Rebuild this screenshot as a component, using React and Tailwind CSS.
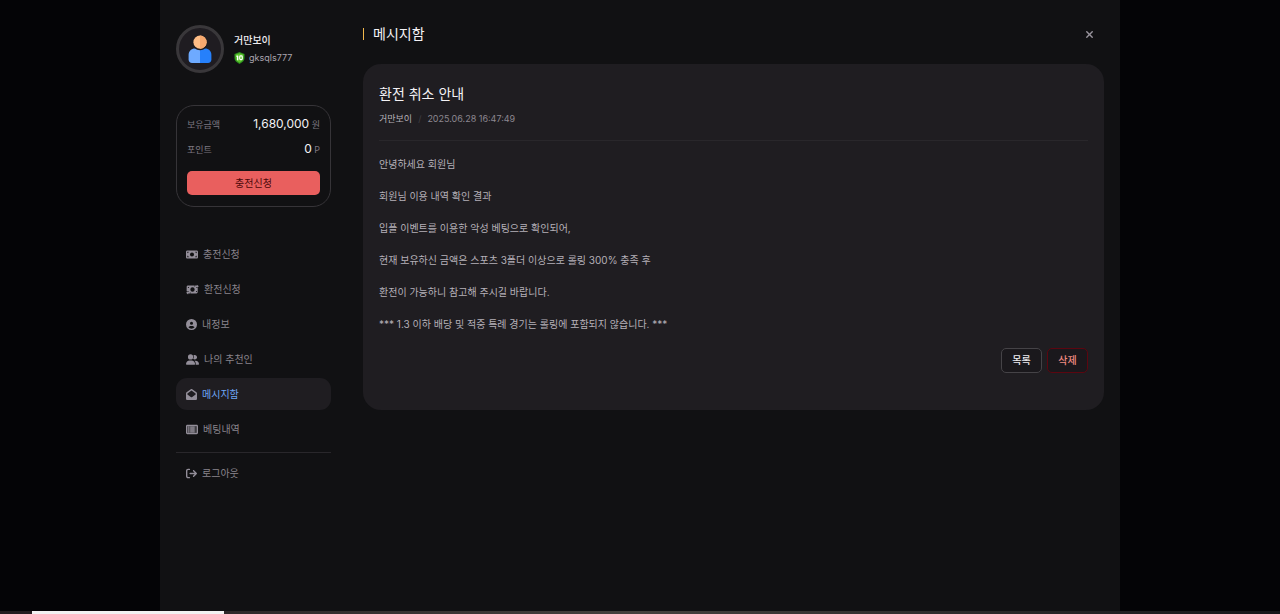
import React from "react";
import {
  FaMoneyBill,
  FaCircleUser,
  FaUserGroup,
  FaEnvelopeOpen,
  FaArrowRightFromBracket,
  FaXmark,
} from "react-icons/fa6";

function SlipIcon(props) {
  return (
    <svg viewBox="0 0 576 512" fill="currentColor" aria-hidden="true" {...props}>
      <path
        fillRule="evenodd"
        d="M64 32h448c35 0 64 29 64 64v320c0 35-29 64-64 64H64c-35 0-64-29-64-64V96c0-35 29-64 64-64zm0 72v304h448V104H64z"
      />
      <path d="M112 104h48v304h-48z" />
      <path d="M200 104h216v304H200z" opacity=".75" />
      <path d="M64 104h448v304H64z" opacity=".35" />
    </svg>
  );
}

function ExchangeBillIcon(props) {
  return (
    <svg viewBox="0 0 640 512" fill="currentColor" aria-hidden="true" {...props}>
      <path
        fillRule="evenodd"
        d="M96 64h336l-24 40h96l8 72h64v208c0 35-29 64-64 64H208l24-40h-96l-8-72H32V128c0-35 29-64 64-64zm224 84a108 108 0 1 0 0 216 108 108 0 0 0 0-216zM96 128v56c31 0 56-25 56-56zm448 256v-56c-31 0-56 25-56 56z"
      />
      <path d="M536 16l96 80-96 80v-48h-88V64h88zM104 336l-96 80 96 80v-48h88v-64h-88z" />
    </svg>
  );
}

function AvatarIcon() {
  return (
    <svg viewBox="0 0 24 28" className="h-7 w-6" aria-hidden="true">
      <path d="M.6 24.5V20c0-4 2.800-6.500 6.400-6.500h5V28H4C2 28 .6 26.500.6 24.500z" fill="#6eaaff" />
      <path d="M23.400 24.500V20c0-4-2.800-6.500-6.400-6.500h-5V28h8c2 0 3.400-1.500 3.400-3.500z" fill="#2680fb" />
      <circle cx="12" cy="7.500" r="7.800" fill="#1f1c21" />
      <circle cx="12" cy="7.200" r="6.600" fill="#ffbd86" />
      <path d="M12 .6a6.600 6.600 0 0 1 0 13.200z" fill="#f6a86f" />
    </svg>
  );
}

function LevelBadge() {
  return (
    <svg viewBox="0 0 24 26" className="h-3 w-[11px]" aria-label="10">
      <path d="M12 0l11 4v9c0 6-5 10-11 13C6 23 1 19 1 13V4z" fill="#2c8f1d" />
      <path d="M12 2.500l8.500 3V13c0 5-4 8-8.500 10.200C7.500 21 3.500 18 3.500 13V5.500z" fill="#5cc32c" />
      <path d="M8 8v10M5.500 10L8 8" stroke="#fff" strokeWidth="3" fill="none" />
      <rect x="12.500" y="8.500" width="5.500" height="8" rx="2" stroke="#fff" strokeWidth="2.500" fill="none" />
    </svg>
  );
}

const menu = [
  { label: "충전신청", Icon: FaMoneyBill, size: "h-[11px] w-3" },
  { label: "환전신청", Icon: ExchangeBillIcon, size: "h-[11px] w-[13px]" },
  { label: "내정보", Icon: FaCircleUser, size: "h-[11px] w-[11px]" },
  { label: "나의 추천인", Icon: FaUserGroup, size: "h-[11px] w-[13px]" },
  { label: "메시지함", Icon: FaEnvelopeOpen, size: "h-[11px] w-[11px]", active: true },
  { label: "베팅내역", Icon: SlipIcon, size: "h-[11px] w-3" },
];

const lines = [
  "안녕하세요 회원님",
  "회원님 이용 내역 확인 결과",
  "입플 이벤트를 이용한 악성 베팅으로 확인되어,",
  "현재 보유하신 금액은 스포츠 3폴더 이상으로 롤링 300% 충족 후",
  "환전이 가능하니 참고해 주시길 바랍니다.",
  "*** 1.3 이하 배당 및 적중 특례 경기는 롤링에 포함되지 않습니다. ***",
];

function MenuItem({ label, Icon, size, active }) {
  return (
    <a
      href="#"
      aria-current={active ? "page" : undefined}
      className={
        active
          ? "flex h-8 items-center gap-[5px] rounded-[11px] bg-[#1f1d21] px-[10px] text-[#6ea6f5]"
          : "flex h-8 items-center gap-[5px] rounded-[11px] px-[10px] text-[#89848c]"
      }
    >
      <Icon className={`shrink-0 text-[#938e99] ${size}`} />
      {label}
    </a>
  );
}

function Sidebar() {
  return (
    <aside className="w-[155px] shrink-0 pt-[25px]">
      <div className="flex items-center gap-[10px]">
        <div className="flex h-12 w-12 items-center justify-center rounded-full border-[3px] border-[#39373a] bg-[#1f1c21]">
          <AvatarIcon />
        </div>
        <div className="leading-[18px]">
          <p className="font-medium text-[#eeecef]">거만보이</p>
          <p className="flex items-center gap-1 text-[9px] text-[#aaa4ae]">
            <LevelBadge />
            gksqls777
          </p>
        </div>
      </div>

      <section className="mt-8 rounded-[18px] border border-[#363438] px-[10px] pt-[6px] pb-[11px]">
        <dl className="text-[9px] leading-[25px] text-[#7d7881]">
          <div className="flex items-center justify-between">
            <dt>보유금액</dt>
            <dd>
              <span className="text-xs text-[#f4f2f5]">1,680,000</span> 원
            </dd>
          </div>
          <div className="flex items-center justify-between">
            <dt>포인트</dt>
            <dd>
              <span className="text-xs text-[#f4f2f5]">0</span> P
            </dd>
          </div>
        </dl>
        <button
          type="button"
          className="mt-[9px] flex h-6 w-full items-center justify-center rounded-[5px] bg-[#e95f5e] text-[#4b0709]"
        >
          충전신청
        </button>
      </section>

      <nav className="mt-[31px]">
        <div className="flex flex-col gap-[3px] border-b border-[#29272b] pb-[7px]">
          {menu.map((item) => (
            <MenuItem key={item.label} {...item} />
          ))}
        </div>
        <div className="pt-1">
          <MenuItem label="로그아웃" Icon={FaArrowRightFromBracket} size="h-[11px] w-[11px]" />
        </div>
      </nav>
    </aside>
  );
}

export default function App() {
  return (
    <div className="flex min-h-screen flex-col bg-[#040406] font-['Inter','Noto_Sans_CJK_KR',sans-serif] text-[10px]">
      <div className="mx-auto flex w-3/4 grow gap-8 bg-[#111113] px-4">
        <Sidebar />
        <main className="min-w-0 grow pt-[22px]">
          <header className="flex h-6 items-center justify-between">
            <h1 className="flex items-center gap-[9px] text-sm text-[#f4f2f5]">
              <span className="h-3 w-px bg-[#f2b84c]" />
              메시지함
            </h1>
            <button type="button" aria-label="닫기" className="flex h-6 w-[30px] items-center justify-center text-[#9a959e]">
              <FaXmark className="h-[11px] w-[11px]" />
            </button>
          </header>

          <article className="mt-[18px] rounded-[18px] bg-[#1f1d21] px-4 pt-[18px] pb-[37px]">
            <div className="border-b border-[#29272b] pb-[13px]">
              <h2 className="text-sm leading-6 text-[#f4f2f5]">환전 취소 안내</h2>
              <p className="mt-1 flex gap-[6px] text-[9px] leading-[17px] text-[#8c8790]">
                <span className="text-[#b5b0b8]">거만보이</span>
                <span className="text-[#403e42]">/</span>
                <time>2025.06.28 16:47:49</time>
              </p>
            </div>
            <div className="flex flex-col gap-4 pt-[15px] leading-4 text-[#b5b0b8]">
              {lines.map((line) => (
                <p key={line}>{line}</p>
              ))}
            </div>
            <div className="mt-4 flex justify-end gap-[5px]">
              <button type="button" className="h-[25px] w-[41px] rounded-[5px] border border-[#454347] bg-[#1a181c] font-medium text-[#eeecef]">
                목록
              </button>
              <button type="button" className="h-[25px] w-[41px] rounded-[5px] border border-[#5c0610] bg-[#1a181c] font-medium text-[#f08a80]">
                삭제
              </button>
            </div>
          </article>
        </main>
      </div>
      <footer className="flex h-[3px] bg-linear-to-r from-[#221c1f] via-[#45413e] to-[#17171a] px-8">
        <div className="w-48 bg-[#f2f2f2]" />
      </footer>
    </div>
  );
}
